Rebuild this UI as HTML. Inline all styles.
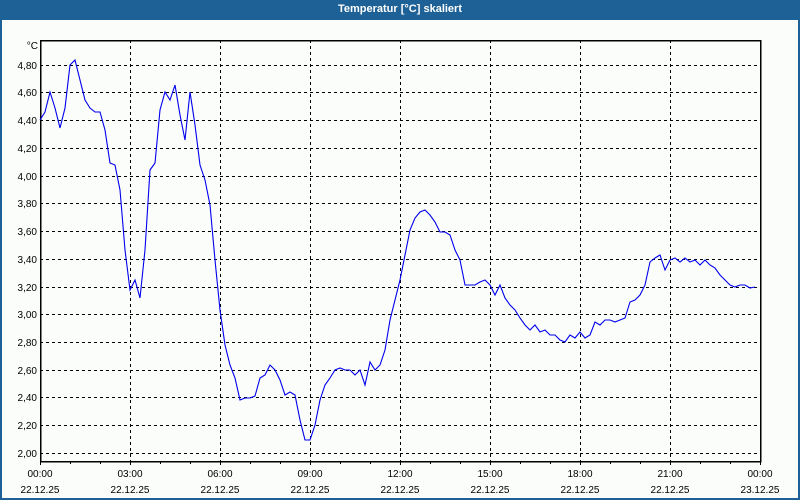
<!DOCTYPE html>
<html><head><style>
body{margin:0;width:800px;height:500px;overflow:hidden;background:#1e6196;}
#w{position:absolute;left:2px;top:20px;width:796px;height:478px;background:#fbfdfa;}
#t{position:absolute;left:0;top:0;width:800px;height:20px;color:#fff;font:bold 11px "Liberation Sans",sans-serif;text-align:center;line-height:18px;}
svg{position:absolute;left:0;top:0}
text{font-family:"Liberation Sans",sans-serif;font-size:10px;fill:#000}
</style></head><body>
<div id="t">Temperatur [°C] skaliert</div>
<div id="w"></div>
<svg width="800" height="500">
<g stroke="#000" stroke-width="1" stroke-dasharray="3,3" shape-rendering="crispEdges">
<line x1="40" x2="760" y1="65.5" y2="65.5"/><line x1="40" x2="760" y1="92.5" y2="92.5"/><line x1="40" x2="760" y1="120.5" y2="120.5"/><line x1="40" x2="760" y1="148.5" y2="148.5"/><line x1="40" x2="760" y1="176.5" y2="176.5"/><line x1="40" x2="760" y1="203.5" y2="203.5"/><line x1="40" x2="760" y1="231.5" y2="231.5"/><line x1="40" x2="760" y1="259.5" y2="259.5"/><line x1="40" x2="760" y1="287.5" y2="287.5"/><line x1="40" x2="760" y1="314.5" y2="314.5"/><line x1="40" x2="760" y1="342.5" y2="342.5"/><line x1="40" x2="760" y1="370.5" y2="370.5"/><line x1="40" x2="760" y1="397.5" y2="397.5"/><line x1="40" x2="760" y1="425.5" y2="425.5"/><line x1="40" x2="760" y1="453.5" y2="453.5"/>
<line y1="40" y2="461" x1="130.5" x2="130.5"/><line y1="40" y2="461" x1="220.5" x2="220.5"/><line y1="40" y2="461" x1="310.5" x2="310.5"/><line y1="40" y2="461" x1="400.5" x2="400.5"/><line y1="40" y2="461" x1="490.5" x2="490.5"/><line y1="40" y2="461" x1="580.5" x2="580.5"/><line y1="40" y2="461" x1="670.5" x2="670.5"/>
</g>
<g stroke="#000" fill="none" shape-rendering="crispEdges">
<path d="M40.5 40.5H760.5V461.5H40.5Z" stroke-width="1.5"/>
<path d="M40.5 461v4M70.5 461v3M100.5 461v3M130.5 461v4M160.5 461v3M190.5 461v3M220.5 461v4M250.5 461v3M280.5 461v3M310.5 461v4M340.5 461v3M370.5 461v3M400.5 461v4M430.5 461v3M460.5 461v3M490.5 461v4M520.5 461v3M550.5 461v3M580.5 461v4M610.5 461v3M640.5 461v3M670.5 461v4M700.5 461v3M730.5 461v3M760.5 461v4"/>
</g>
<polyline fill="none" stroke="#0000ee" stroke-width="1.1" points="40,120 45,112 50,92 55,108 60,128 65,108 70,65 75,60 80,80 85,100 90,108 95,112 100,112 105,130 110,163 115,165 120,190 125,250 130,290 135,280 140,298 145,250 150,170 155,163 160,110 165,92 170,100 175,85 180,115 185,140 190,92 195,125 200,165 205,180 210,205 215,260 220,310 225,345 230,365 235,378 240,400 245,398 250,398 255,396 260,378 265,375 270,365 275,370 280,380 285,395 290,392 295,395 300,420 305,440 310,440 315,425 320,400 325,385 330,378 335,370 340,368 345,370 350,370 355,375 360,370 365,385 370,362 375,370 380,365 385,350 390,320 395,300 400,280 405,255 410,230 415,218 420,212 425,210 430,215 435,222 440,232 445,232 450,235 455,250 460,260 465,285 470,285 475,285 480,282 485,280 490,285 495,295 500,285 505,298 510,305 515,310 520,318 525,325 530,330 535,325 540,332 545,330 550,335 555,335 560,340 565,342 570,335 575,338 580,332 585,338 590,335 595,322 600,325 605,320 610,320 615,322 620,320 625,318 630,302 635,300 640,295 645,285 650,262 655,258 660,255 665,270 670,260 675,258 680,262 685,258 690,262 695,260 700,265 705,260 710,265 715,268 720,275 725,280 730,285 735,287 740,285 745,285 750,288 755,287"/>
<g text-anchor="end">
<text x="38" y="49">°C</text>
<text x="37" y="69">4,80</text><text x="37" y="96">4,60</text><text x="37" y="124">4,40</text><text x="37" y="152">4,20</text><text x="37" y="180">4,00</text><text x="37" y="207">3,80</text><text x="37" y="235">3,60</text><text x="37" y="263">3,40</text><text x="37" y="291">3,20</text><text x="37" y="318">3,00</text><text x="37" y="346">2,80</text><text x="37" y="374">2,60</text><text x="37" y="401">2,40</text><text x="37" y="429">2,20</text><text x="37" y="457">2,00</text>
</g>
<g text-anchor="middle">
<text x="40" y="477">00:00</text><text x="40" y="493">22.12.25</text>
<text x="130" y="477">03:00</text><text x="130" y="493">22.12.25</text>
<text x="220" y="477">06:00</text><text x="220" y="493">22.12.25</text>
<text x="310" y="477">09:00</text><text x="310" y="493">22.12.25</text>
<text x="400" y="477">12:00</text><text x="400" y="493">22.12.25</text>
<text x="490" y="477">15:00</text><text x="490" y="493">22.12.25</text>
<text x="580" y="477">18:00</text><text x="580" y="493">22.12.25</text>
<text x="670" y="477">21:00</text><text x="670" y="493">22.12.25</text>
<text x="760" y="477">00:00</text><text x="760" y="493">23.12.25</text>
</g>
</svg>
</body></html>
